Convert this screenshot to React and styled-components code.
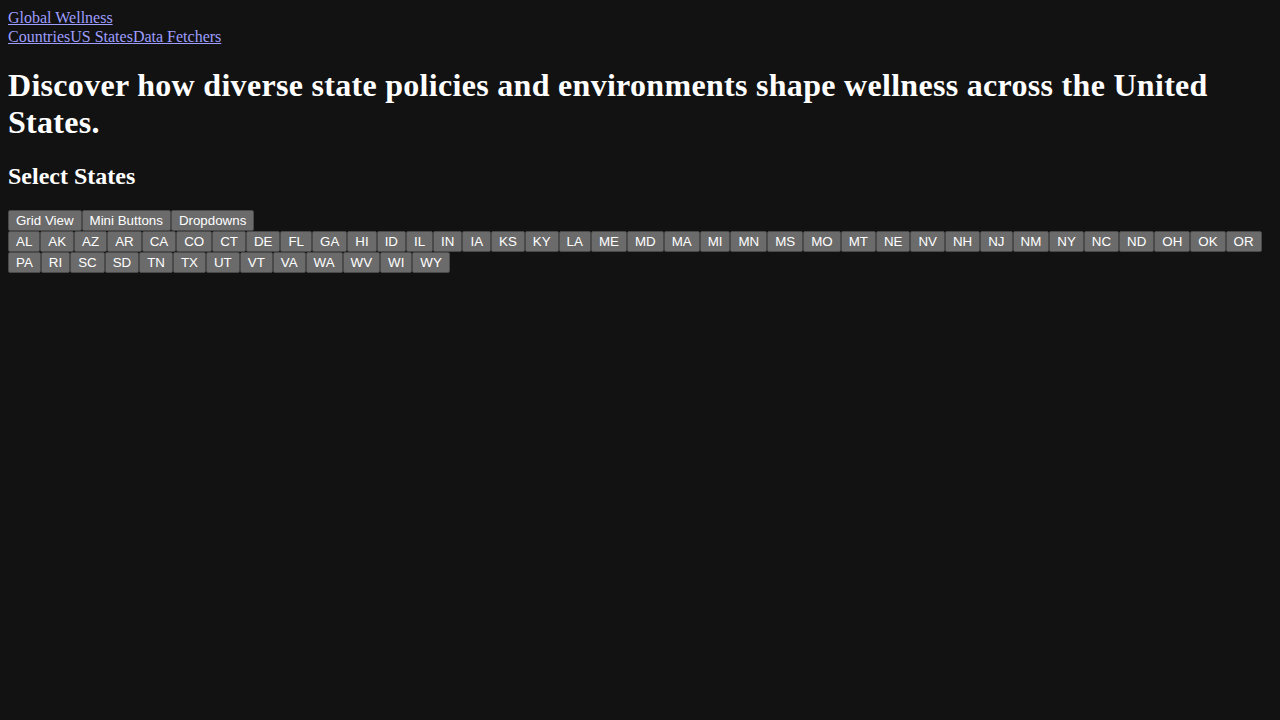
import styled, { createGlobalStyle } from "styled-components"

const GlobalStyle = createGlobalStyle`
    html {
        color-scheme: dark;
    }
    body {
        margin: 8px;
        background: #121212;
        color: #ffffff;
        font-family: "Liberation Serif", "Times New Roman", serif;
        font-size: 16px;
    }
`

const NavLink = styled.a`
    color: #9e9eff;
    text-decoration: underline;
    cursor: pointer;
`

const Brand = styled.div`
    line-height: 19px;
`

const NavLinks = styled.div`
    display: flex;
    line-height: 19px;
`

const Title = styled.h1`
    font-size: 32px;
    font-weight: bold;
    letter-spacing: 0.3px;
    margin: 21.44px 0;
`

const SubTitle = styled.h2`
    font-size: 24px;
    font-weight: bold;
    margin: 19.92px 0;
`

const ButtonRow = styled.div`
    display: flex;
    flex-wrap: wrap;
`

const Button = styled.button`
    font-family: "Liberation Sans", Arial, sans-serif;
    font-size: 13.333px;
    line-height: normal;
    color: #ffffff;
    background: #6b6b6b;
    border: 1px solid #4a4a4a;
    border-radius: 2px;
    padding: 2px 7px;
    margin: 0;
    cursor: pointer;
`

const STATES = [
    "AL", "AK", "AZ", "AR", "CA", "CO", "CT", "DE", "FL", "GA", "HI", "ID", "IL", "IN", "IA",
    "KS", "KY", "LA", "ME", "MD", "MA", "MI", "MN", "MS", "MO", "MT", "NE", "NV", "NH", "NJ",
    "NM", "NY", "NC", "ND", "OH", "OK", "OR", "PA", "RI", "SC", "SD", "TN", "TX", "UT", "VT",
    "VA", "WA", "WV", "WI", "WY",
]

const App = () => {
    return (<>
        <GlobalStyle/>
        <nav>
            <Brand><NavLink>Global Wellness</NavLink></Brand>
            <NavLinks>
                <NavLink>Countries</NavLink>
                <NavLink>US States</NavLink>
                <NavLink>Data Fetchers</NavLink>
            </NavLinks>
        </nav>
        <Title>Discover how diverse state policies and environments shape wellness across the United States.</Title>
        <SubTitle>Select States</SubTitle>
        <ButtonRow>
            <Button>Grid View</Button>
            <Button>Mini Buttons</Button>
            <Button>Dropdowns</Button>
        </ButtonRow>
        <ButtonRow>
            {STATES.map(s => <Button key={s}>{s}</Button>)}
        </ButtonRow>
    </>)
}

export default App
